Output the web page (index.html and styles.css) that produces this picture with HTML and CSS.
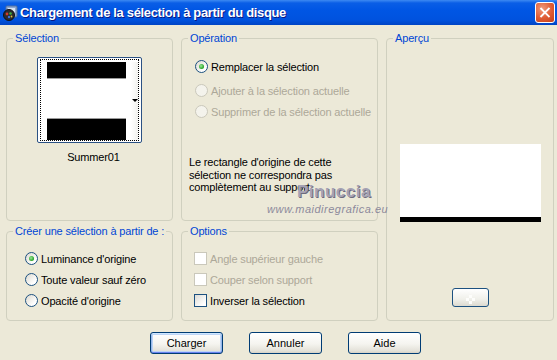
FILE: index.html
```html
<!DOCTYPE html>
<html lang="fr">

<head>
    <meta charset="UTF-8">
    <title>Chargement de la sélection à partir du disque</title>
    <link rel="stylesheet" href="styles.css">
</head>

<body>
    <div class="window">
        <div class="titlebar">
            <svg class="app-icon" viewBox="0 0 16 16">
                <rect x="4" y="1" width="11" height="11" rx="1" fill="#8EA9D2" stroke="#4F6E9E"/>
                <rect x="6" y="3" width="7" height="7" fill="#D8E4F4"/>
                <circle cx="7" cy="10" r="5.5" fill="#2A2A2E" stroke="#101014"/>
                <circle cx="5" cy="9" r="1.4" fill="#D23A2A"/>
                <circle cx="8.5" cy="8.5" r="1.3" fill="#3FAF3A"/>
                <circle cx="7" cy="12" r="1.2" fill="#3A6FD8"/>
                <circle cx="9.5" cy="11.5" r="0.9" fill="#E8C23A"/>
            </svg>
            <span class="title">Chargement de la sélection à partir du disque</span>
            <span class="close">
                <svg viewBox="0 0 21 21"><path d="M6 6 L15 15 M15 6 L6 15" stroke="#fff" stroke-width="2.2" stroke-linecap="square"/></svg>
            </span>
        </div>

        <div class="panels">
            <fieldset class="group">
                <legend>Sélection</legend>
                <div class="thumb">
                    <div class="thumb-focus">
                        <div class="thumb-img">
                            <div class="bar-top"></div>
                            <div class="mid"></div>
                            <div class="bar-bottom"></div>
                        </div>
                        <div class="thumb-side"><span class="caret"></span></div>
                    </div>
                </div>
                <div class="thumb-name">Summer01</div>
            </fieldset>

            <fieldset class="group op">
                <legend>Opération</legend>
                <div class="opt first"><span class="radio on"></span>Remplacer la sélection</div>
                <div class="opt off"><span class="radio"></span>Ajouter à la sélection actuelle</div>
                <div class="opt off"><span class="radio"></span>Supprimer de la sélection actuelle</div>
                <p class="note">Le rectangle d'origine de cette<br>sélection ne correspondra pas<br>complètement au support.</p>
            </fieldset>

            <fieldset class="group preview">
                <legend>Aperçu</legend>
                <div class="preview-img"></div>
                <div class="small-btn">
                    <svg viewBox="0 0 35 17"><path d="M13 9h3v3h-3zM19 9h3v3h-3zM16 12h3v3h-3zM16 6h3v3h-3z" fill="#FDFDFB"/></svg>
                </div>
            </fieldset>

            <fieldset class="group create">
                <legend>Créer une sélection à partir de :</legend>
                <div class="opt"><span class="radio on"></span>Luminance d'origine</div>
                <div class="opt"><span class="radio"></span>Toute valeur sauf zéro</div>
                <div class="opt"><span class="radio"></span>Opacité d'origine</div>
            </fieldset>

            <fieldset class="group opts">
                <legend>Options</legend>
                <div class="opt off"><span class="check"></span>Angle supérieur gauche</div>
                <div class="opt off"><span class="check"></span>Couper selon support</div>
                <div class="opt"><span class="check"></span>Inverser la sélection</div>
            </fieldset>
        </div>

        <div class="buttons">
            <button class="btn default">Charger</button>
            <button class="btn">Annuler</button>
            <button class="btn">Aide</button>
        </div>

        <div class="wm-name">Pinuccia</div>
        <div class="wm-url">www.maidiregrafica.eu</div>
    </div>
</body>

</html>
```

FILE: styles.css
```css
* {
    box-sizing: border-box;
}

body {
    margin: 0;
    background-color: #ECE9D8;
    font-family: "Liberation Sans", Arial, sans-serif;
    font-size: 11px;
    letter-spacing: -0.15px;
    color: #000;
}

.window {
    width: 557px;
    height: 360px;
    position: relative;
    overflow: hidden;
}

/* title bar */
.titlebar {
    height: 25px;
    display: flex;
    align-items: center;
    padding: 0 2px 0 2px;
    background: linear-gradient(#3D8AF2 0, #0A5EE6 3px, #0056E4 40%, #0052DE 80%, #0044C4 100%);
}

.app-icon {
    width: 16px;
    height: 16px;
    margin-right: 2px;
}

.title {
    flex: 1;
    color: #fff;
    font-weight: bold;
    font-size: 13px;
    letter-spacing: -0.35px;
    text-shadow: 1px 1px #0A1883;
}

.close {
    width: 20px;
    height: 21px;
    border: 1px solid #fff;
    border-radius: 3px;
    background: radial-gradient(circle at 35% 30%, #F09A7C, #DF5A32 55%, #C2401C);
    display: flex;
}

.close svg {
    width: 100%;
    height: 100%;
}

/* group boxes */
.panels {
    display: grid;
    grid-template-columns: 167px 197px 168px;
    grid-template-rows: 189px 96px;
    column-gap: 8px;
    row-gap: 4px;
    margin-top: 7px;
    padding-left: 6px;
}

.group {
    margin: 0;
    padding: 0;
    min-width: 0;
    border: 1px solid #D0D0BF;
    border-radius: 4px;
}

.group legend {
    margin-left: 6px;
    padding: 0 2px;
    color: #0046D5;
    line-height: 13px;
    white-space: nowrap;
}

.preview {
    grid-column: 3;
    grid-row: 1 / span 2;
    display: flex;
    flex-direction: column;
    align-items: center;
}

/* thumbnail */
.thumb {
    width: 105px;
    height: 86px;
    margin: 12px auto 0;
    padding: 1px 2px;
    border: 1px solid #2B5183;
    border-radius: 2px;
    background-color: #fff;
}

.thumb-focus {
    height: 100%;
    display: flex;
    padding: 2px 0 0 6px;
    border: 1px dotted #000;
}

.thumb-img {
    width: 79px;
    display: flex;
    flex-direction: column;
}

.bar-top {
    height: 16px;
    background-color: #000;
    border-bottom: 1px solid #9A9A9A;
    box-sizing: content-box;
}

.mid {
    flex: 1;
    background-color: #fff;
    border-bottom: 1px solid #9A9A9A;
}

.bar-bottom {
    height: 21px;
    background-color: #000;
}

.thumb-side {
    flex: 1;
    display: flex;
    align-items: center;
    justify-content: flex-end;
    padding: 0 0 2px;
    background: linear-gradient(90deg, #fff 40%, #F1F1EE);
}

.caret {
    width: 0;
    height: 0;
    border-left: 3px solid transparent;
    border-right: 3px solid transparent;
    border-top: 3px solid #000;
}

.thumb-name {
    margin-top: 8px;
    padding-left: 8px;
    text-align: center;
    line-height: 13px;
}

/* radios and checkboxes */
.opt {
    display: flex;
    align-items: center;
    height: 21px;
}

.op {
    padding-top: 11px;
}

.op .opt {
    margin-left: 13px;
}

.op .first {
    margin-bottom: 3px;
}

.create {
    padding-top: 10px;
}

.create .opt {
    margin-left: 18px;
}

.opts {
    padding-top: 10px;
}

.opts .opt {
    margin-left: 12px;
}

.opt.off {
    color: #ACA899;
}

.radio {
    width: 13px;
    height: 13px;
    margin-right: 3px;
    border: 1px solid #1C5180;
    border-radius: 50%;
    background: linear-gradient(135deg, #DCD9CF, #FFFFFF 75%);
    display: flex;
    align-items: center;
    justify-content: center;
}

.radio.on::after {
    content: "";
    width: 5px;
    height: 5px;
    border-radius: 50%;
    background: radial-gradient(circle at 40% 40%, #9EE89A, #21A121 70%);
}

.off .radio {
    border-color: #CAC8BB;
    background: #F4F3EC;
}

.check {
    width: 13px;
    height: 13px;
    margin-right: 3px;
    border: 1px solid #1C5180;
    background: linear-gradient(135deg, #DCDBD5, #FFFFFF 80%);
}

.off .check {
    border-color: #CAC8BB;
    background: #FFFFFF;
}

.note {
    margin: 34px 0 0 7px;
    line-height: 12.5px;
}

/* preview */
.preview-img {
    width: 141px;
    height: 78px;
    margin-top: 99px;
    background-color: #fff;
    border-bottom: 5px solid #000;
}

.small-btn {
    width: 37px;
    height: 19px;
    margin-top: 66px;
    border: 1px solid #1C5180;
    border-radius: 3px;
    background: linear-gradient(#FFFFFF, #F0F0EA 60%, #DCDAD0);
    display: flex;
}

.small-btn svg {
    width: 100%;
    height: 100%;
}

/* dialog buttons */
.buttons {
    display: flex;
    gap: 26px;
    margin-top: 11px;
    padding-left: 150px;
}

.btn {
    width: 73px;
    height: 22px;
    padding: 0;
    border: 1px solid #003C74;
    border-radius: 3px;
    background: linear-gradient(#FFFFFF, #F5F4EF 55%, #E3E1D8 90%, #D6D0C5);
    font-family: "Liberation Sans", Arial, sans-serif;
    font-size: 11px;
    color: #000;
}

.btn.default {
    box-shadow: inset 0 1px 0 #CEE7FF, inset 0 -1px 0 #6982EE, inset 1px 0 0 #98B8EA, inset -1px 0 0 #98B8EA, inset 0 0 0 2px #BCD4F6;
}

/* watermark */
.wm-name {
    position: absolute;
    left: 297px;
    top: 182px;
    font-size: 17px;
    font-weight: bold;
    letter-spacing: 0.5px;
    color: #A5A2B4;
    text-shadow: 1px 1px #6E6B7E;
}

.wm-url {
    position: absolute;
    left: 267px;
    top: 203px;
    font-size: 11px;
    font-style: italic;
    letter-spacing: 0.5px;
    color: #8C899C;
}
```
